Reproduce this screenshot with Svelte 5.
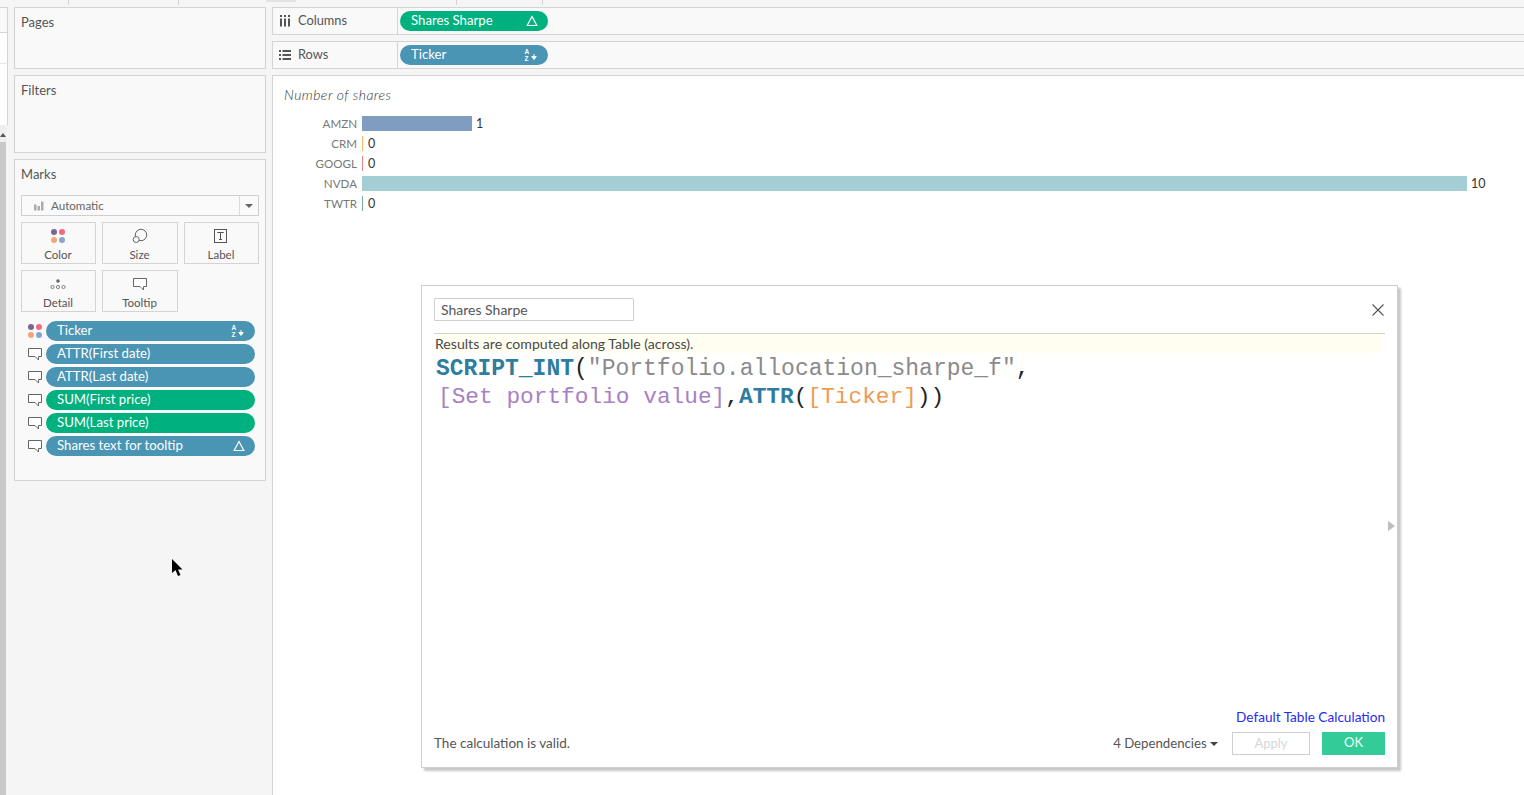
<script>
  const rows = [
    { name: 'AMZN', value: '1', width: 110, color: '#7f9dc1' },
    { name: 'CRM', value: '0', width: 1, color: '#f5b75f' },
    { name: 'GOOGL', value: '0', width: 1, color: '#ee8585' },
    { name: 'NVDA', value: '10', width: 1105, color: '#a3ced4' },
    { name: 'TWTR', value: '0', width: 1, color: '#6fb49f' }
  ];
  const tips = [
    { label: 'ATTR(First date)', cls: 'blue' },
    { label: 'ATTR(Last date)', cls: 'blue' },
    { label: 'SUM(First price)', cls: 'green' },
    { label: 'SUM(Last price)', cls: 'green' },
    { label: 'Shares text for tooltip', cls: 'blue', delta: true }
  ];
</script>

{#snippet dots()}
  <svg class="ico16" viewBox="0 0 16 16"><circle cx="4" cy="4" r="3" fill="#7d6592"/><circle cx="12" cy="4" r="3" fill="#f06a80"/><circle cx="4" cy="12" r="3" fill="#f2a678"/><circle cx="12" cy="12" r="3" fill="#86a5cc"/></svg>
{/snippet}
{#snippet bubble()}
  <svg class="ico16" viewBox="0 0 16 16"><path d="M1.5 2.500h13v8h-3v3.500l-3.500-3.500h-6.500z" fill="#fff" stroke="#666" stroke-width="1"/></svg>
{/snippet}
{#snippet sort()}
  <svg class="sort" viewBox="0 0 14 14"><text x="0.5" y="6" font-size="6.5" font-weight="700" fill="#fff" font-family="Liberation Sans, sans-serif">A</text><text x="0.5" y="13" font-size="6.5" font-weight="700" fill="#fff" font-family="Liberation Sans, sans-serif">Z</text><path d="M10 6v4M7.800 8.500l2.200 3 2.200-3z" stroke="#fff" fill="#fff" stroke-width="1"/></svg>
{/snippet}
{#snippet delta()}
  <svg class="delta" viewBox="0 0 12 12"><path d="M6 1.500L10.800 10.500H1.200z" fill="none" stroke="#fff" stroke-width="1.200"/></svg>
{/snippet}

<div class="page">
  <div class="strip">
    <span class="tick w68"></span><span class="tick w110"></span><span class="tab"></span><span class="tick w160"></span><span class="tick w86"></span>
  </div>
  <div class="layout">
    <div class="rail">
      <div class="r1"></div>
      <div class="r2"></div>
      <div class="r3"></div>
      <div class="scroll-head"><svg width="6" height="5" viewBox="0 0 6 5"><path d="M0 5l3-4 3 4z" fill="#555"/></svg></div>
      <div class="scroll-thumb"></div>
    </div>

    <aside class="side">
      <section class="card pages"><h3>Pages</h3></section>
      <section class="card filters"><h3>Filters</h3></section>
      <section class="card marks">
        <h3>Marks</h3>
        <div class="select">
          <svg class="bars" viewBox="0 0 10 10"><path d="M0 3.500h2.500v6H0zM3.500 5h2.500v4.500H3.500zM7 .5h2.500v9H7z" fill="#ababab"/></svg>
          <span>Automatic</span>
          <div class="caret"><i></i></div>
        </div>
        <div class="btns">
          <div class="btn">{@render dots()}<span>Color</span></div>
          <div class="btn">
            <svg class="ico16" viewBox="0 0 16 16"><circle cx="9" cy="7" r="5.700" fill="none" stroke="#666"/><circle cx="4.200" cy="11.500" r="3" fill="#f9f9f9" stroke="#666"/></svg>
            <span>Size</span>
          </div>
          <div class="btn">
            <svg class="ico16" viewBox="0 0 16 16"><rect x="1.500" y="1.500" width="12" height="13" fill="none" stroke="#555"/><path d="M4.500 5v-.5h6v.5M7.500 4.500v6.500M6 11.500h3" fill="none" stroke="#555"/></svg>
            <span>Label</span>
          </div>
          <div class="btn">
            <svg class="ico16" viewBox="0 0 16 16"><circle cx="8" cy="5" r="1.800" fill="#666"/><circle cx="2.500" cy="11" r="1.600" fill="none" stroke="#666" stroke-width=".8"/><circle cx="8" cy="11" r="1.600" fill="none" stroke="#666" stroke-width=".8"/><circle cx="13.500" cy="11" r="1.600" fill="none" stroke="#666" stroke-width=".8"/></svg>
            <span>Detail</span>
          </div>
          <div class="btn">{@render bubble()}<span>Tooltip</span></div>
        </div>
        <div class="mark-pills">
          <div class="mark-row">
            {@render dots()}
            <div class="pill blue"><span>Ticker</span>{@render sort()}</div>
          </div>
          {#each tips as t}
            <div class="mark-row">
              {@render bubble()}
              <div class="pill {t.cls}"><span>{t.label}</span>{#if t.delta}{@render delta()}{/if}</div>
            </div>
          {/each}
        </div>
      </section>
    </aside>

    <main class="main">
      <div class="shelf">
        <div class="shelf-label">
          <svg class="shelf-ico" viewBox="0 0 12 12"><path d="M1 0h2v2H1zM5 0h2v2H5zM9 0h2v2H9zM1 3.500h2v8H1zM5 3.500h2v8H5zM9 3.500h2v8H9z" fill="#555"/></svg>
          <span>Columns</span>
        </div>
        <div class="shelf-body"><div class="pill green wide"><span>Shares Sharpe</span>{@render delta()}</div></div>
      </div>
      <div class="shelf">
        <div class="shelf-label">
          <svg class="shelf-ico" viewBox="0 0 12 12"><path d="M0 1h2v2H0zM3.500 1h8.500v2H3.500zM0 5h2v2H0zM3.500 5h8.500v2H3.500zM0 9h2v2H0zM3.500 9h8.500v2H3.500z" fill="#555"/></svg>
          <span>Rows</span>
        </div>
        <div class="shelf-body"><div class="pill blue wide"><span>Ticker</span>{@render sort()}</div></div>
      </div>
      <div class="view">
        <div class="axis-title">Number of shares</div>
        <div class="chart">
          {#each rows as r}
            <div class="row">
              <div class="name">{r.name}</div>
              <div class="bar" style="width:{r.width}px;background:{r.color}"></div>
              <div class="val" class:zero={r.width === 1}>{r.value}</div>
            </div>
          {/each}
        </div>
      </div>
    </main>
  </div>

  <div class="dialog">
    <div class="dlg-head">
      <div class="input">Shares Sharpe</div>
      <svg class="close" viewBox="0 0 12 12"><path d="M.5.500l11 11M11.500.500l-11 11" stroke="#555" stroke-width="1.100" fill="none"/></svg>
    </div>
    <div class="note">Results are computed along Table (across).</div>
    <div class="code">
      <div class="l1"><b>SCRIPT_INT</b><span class="p">(</span><span class="s">"Portfolio.allocation_sharpe_f"</span><span class="p">,</span></div>
      <div class="l2"><span class="f">[Set portfolio value]</span><span class="p">,</span><b>ATTR</b><span class="p">(</span><span class="o">[Ticker]</span><span class="p">))</span></div>
    </div>
    <div class="dlg-foot">
      <div class="link">Default Table Calculation</div>
      <div class="foot-row">
        <div class="valid">The calculation is valid.</div>
        <div class="deps">4 Dependencies <i></i></div>
        <div class="apply">Apply</div>
        <div class="ok">OK</div>
      </div>
    </div>
    <div class="handle"></div>
  </div>

  <svg class="cursor" viewBox="0 0 12 18"><path d="M1 0v14l3.500-3 2.500 6 2.500-1-2.500-5.500h4.500z" fill="#000"/></svg>
</div>

<style>
  :global(body) { margin: 0; }
  .page {
    position: relative;
    width: 1524px;
    height: 795px;
    overflow: hidden;
    background: #f5f5f5;
    font-family: "Lato", "Open Sans", sans-serif;
    font-size: 12px;
    color: #4f4f4f;
  }
  .strip { display: flex; height: 7px; align-items: flex-start; padding-left: 68px; box-sizing: border-box; }
  .tick { height: 5px; border-left: 1px solid #d4d4d4; box-sizing: border-box; flex: none; }
  .w68 { width: 110px; }
  .w110 { width: 88px; }
  .tab { width: 30px; height: 2px; background: #e3e3e3; flex: none; margin-right: 160px; }
  .w160 { width: 86px; }
  .w86 { width: 10px; }
  .layout {
    display: grid;
    grid-template-columns: 8px 252px 1fr;
    gap: 6px;
    height: 788px;
  }
  .rail { display: flex; flex-direction: column; height: 788px; }
  .r1 { height: 26px; background: #f9f9f9; border: 1px solid #d4d4d4; border-left: 0; box-sizing: border-box; }
  .r2 { height: 30px; background: #fff; border-right: 1px solid #d4d4d4; box-sizing: border-box; }
  .r3 { height: 62px; background: #fff; border-top: 1px solid #e6e6e6; border-right: 1px solid #d4d4d4; box-sizing: border-box; }
  .scroll-head { height: 17px; background: #eeeeee; width: 7px; display: flex; justify-content: flex-start; padding-top: 7px; box-sizing: border-box; }
  .scroll-thumb { flex: 1; width: 6px; background: #c9c9c9; }
  .side { display: flex; flex-direction: column; gap: 6px; }
  .card { background: #f9f9f9; border: 1px solid #d4d4d4; box-sizing: border-box; padding: 6px 6px; }
  .card h3 { margin: 0; font-weight: 400; font-size: 13px; line-height: 16px; color: #555; }
  .pages { height: 62px; }
  .filters { height: 78px; }
  .marks { height: 322px; }
  .select {
    margin-top: 13px;
    height: 21px;
    border: 1px solid #cfcfcf;
    box-sizing: border-box;
    background: #fafafa;
    display: flex;
    align-items: center;
    padding-left: 12px;
    gap: 7px;
    font-size: 11.600px;
    color: #666;
  }
  .bars { width: 10px; height: 10px; }
  .caret { margin-left: auto; width: 18px; height: 19px; border-left: 1px solid #dcdcdc; display: flex; align-items: center; justify-content: center; }
  .caret i { width: 0; height: 0; border: 4px solid transparent; border-top: 4px solid #666; border-bottom: 0; }
  .btns { display: grid; grid-template-columns: 75px 76px 75px; gap: 6px; margin-top: 6px; }
  .btn {
    height: 42px;
    border: 1px solid #d4d4d4;
    box-sizing: border-box;
    display: flex;
    flex-direction: column;
    align-items: center;
    padding: 5px 1px 0 0;
    font-size: 11.500px;
    line-height: 14px;
    color: #555;
    gap: 4px;
  }
  .ico16 { width: 16px; height: 16px; flex: none; display: block; }
  .mark-pills { margin-top: 9px; display: flex; flex-direction: column; gap: 3px; padding: 0 4px 0 6px; }
  .mark-row { display: flex; align-items: center; gap: 3px; }
  .pill {
    flex: 1;
    height: 20px;
    border-radius: 10px;
    color: #fff;
    display: flex;
    align-items: center;
    justify-content: space-between;
    padding: 0 11px;
    box-sizing: border-box;
    font-size: 13.200px;
  }
  .pill span { margin-top: -3px; }
  .blue { background: #4a94b4; }
  .green { background: #00b180; }
  .wide { flex: none; width: 148px; }
  .sort { width: 14px; height: 14px; margin-right: -1px; }
  .delta { width: 12px; height: 12px; margin-right: -1px; }
  .main { display: flex; flex-direction: column; gap: 6px; }
  .shelf { height: 28px; display: flex; border: 1px solid #d4d4d4; border-right: 0; box-sizing: border-box; background: #f9f9f9; }
  .shelf-label { width: 125px; flex: none; border-right: 1px solid #d4d4d4; display: flex; align-items: center; padding-left: 6px; gap: 7px; box-sizing: border-box; font-size: 12.800px; color: #555; }
  .shelf-label span { margin-top: -3px; }
  .shelf-ico { width: 12px; height: 12px; margin-top: -1px; }
  .shelf-body { flex: 1; display: flex; align-items: center; padding-left: 2px; }
  .view { flex: 1; background: #fff; border: 1px solid #d4d4d4; border-right: 0; border-bottom: 0; box-sizing: border-box; padding: 11px 0 0 11px; }
  .axis-title { font-style: italic; font-weight: 300; font-size: 14px; letter-spacing: .45px; line-height: 16px; color: #333; }
  .chart { margin-top: 10px; }
  .row { display: flex; align-items: center; height: 20px; }
  .name { width: 73px; margin-right: 5px; text-align: right; color: #777; font-size: 11.600px; flex: none; }
  .bar { height: 15px; flex: none; }
  .val { margin-left: 4px; font-size: 12.500px; color: #333; }
  .val.zero { margin-left: 5px; }
  .dialog {
    position: absolute;
    left: 421px;
    top: 285px;
    width: 977px;
    height: 483px;
    box-sizing: border-box;
    background: #fff;
    border: 1px solid #cfcfcf;
    box-shadow: 3px 3px 2px rgba(0,0,0,.22);
    padding: 12px 12px 12px 12px;
    display: flex;
    flex-direction: column;
  }
  .dlg-head { height: 36px; flex: none; display: flex; justify-content: space-between; align-items: flex-start; border-bottom: 1px solid #cfcfcf; box-sizing: border-box; }
  .input { width: 200px; height: 23px; border: 1px solid #cfcfcf; border-radius: 1px; box-sizing: border-box; padding-left: 6px; line-height: 22px; font-size: 14px; color: #555; }
  .close { width: 12px; height: 12px; margin-top: 6px; margin-right: 1px; }
  .note { flex: none; height: 19px; line-height: 20px; background: #fffef0; margin: 0 3px 0 1px; font-size: 14.100px; color: #4a4a4a; }
  .code { flex: none; font-family: "Liberation Mono", monospace; line-height: 28px; margin: 2px 0 0 2px; color: #222; }
  .code b { color: #2e7d9f; }
  .l1 { font-size: 23px; }
  .l2 { font-size: 22.800px; padding-left: 2px; }
  .s { color: #8a8a8a; }
  .f { color: #a781c4; }
  .o { color: #f09a50; }
  .dlg-foot { margin-top: auto; }
  .link { text-align: right; color: #2a2aee; font-size: 13.600px; line-height: 18px; }
  .foot-row { display: flex; align-items: center; margin-top: 6px; height: 23px; font-size: 13.500px; color: #555; }
  .valid { flex: 1; margin-top: -1px; }
  .deps { margin-top: -1px; font-size: 13.200px; }
  .deps i { display: inline-block; width: 0; height: 0; border: 4px solid transparent; border-top-color: #444; border-bottom: 0; vertical-align: 2px; }
  .apply { width: 78px; height: 23px; border: 1px solid #cfcfcf; box-sizing: border-box; text-align: center; line-height: 21px; color: #d6d6d6; margin-left: 14px; font-size: 13px; }
  .ok { width: 63px; height: 23px; background: #33cc99; color: #e8fff7; text-align: center; line-height: 21px; margin-left: 12px; font-size: 13px; }
  .handle { position: absolute; right: 2px; top: 235px; width: 0; height: 0; border: 5.500px solid transparent; border-left: 7px solid #bdbdbd; border-right: 0; }
  .cursor { position: absolute; left: 171px; top: 559px; width: 12px; height: 18px; }
</style>
